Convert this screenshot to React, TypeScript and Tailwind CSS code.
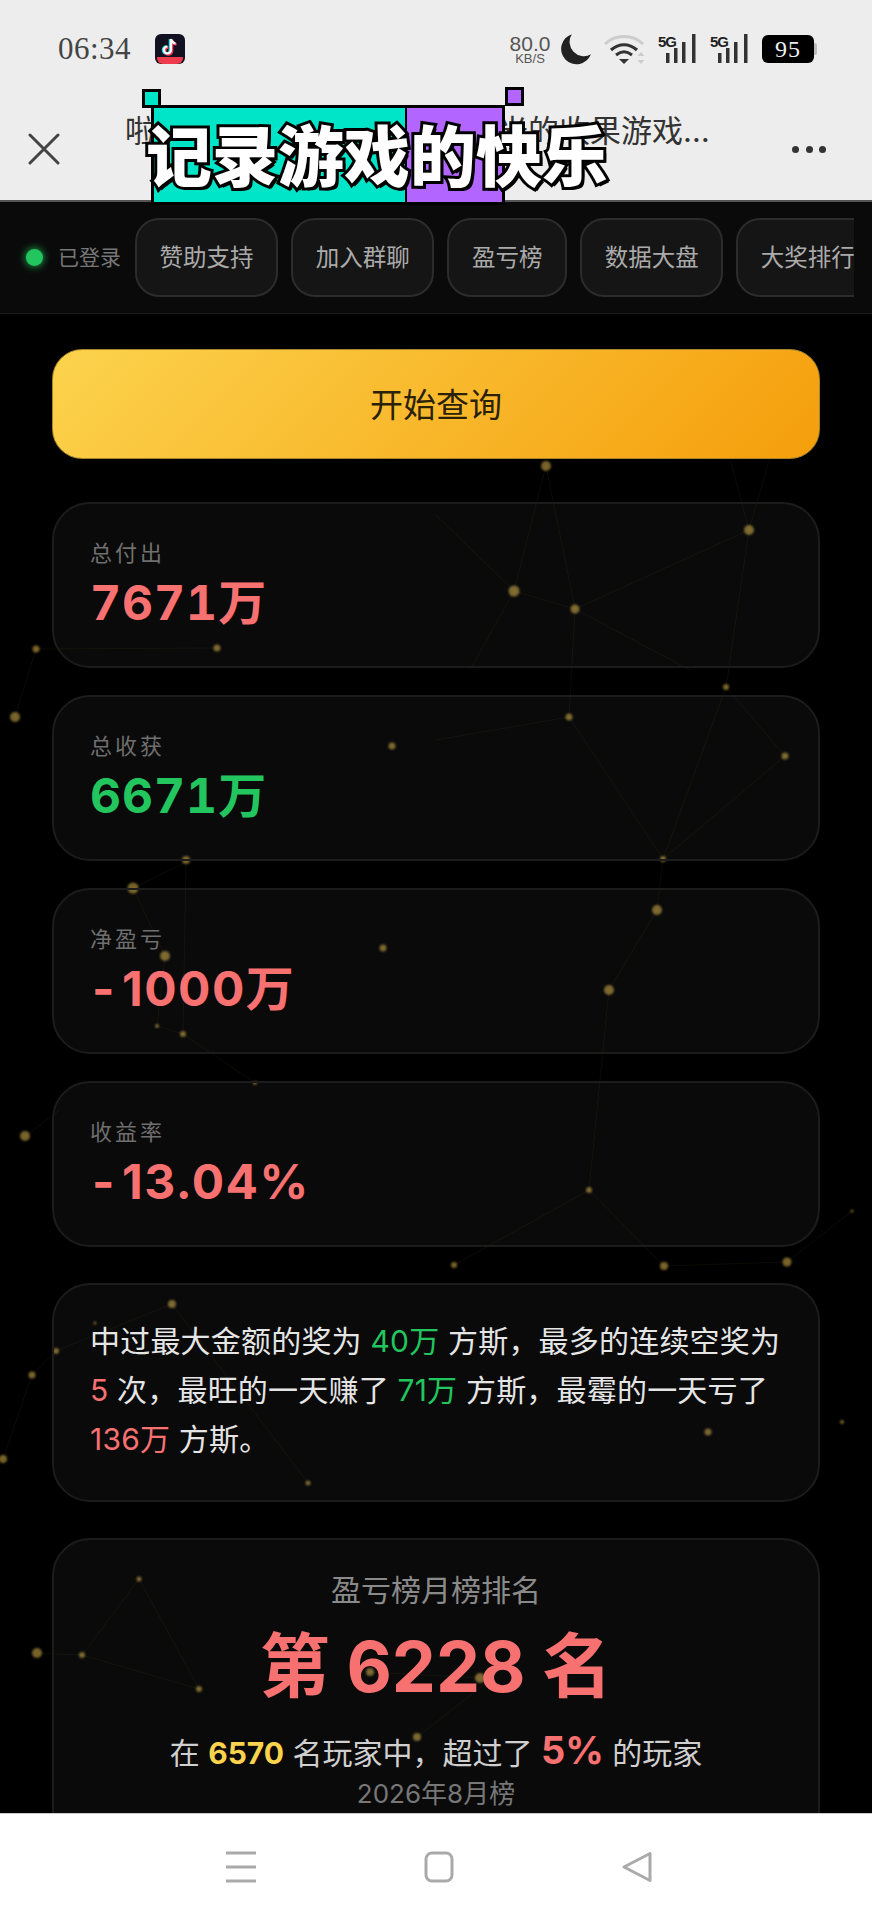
import React from "react";

const stats = [
  { label: "总付出", value: "7671万", color: "text-[#f87171]", negative: false },
  { label: "总收获", value: "6671万", color: "text-[#22c55e]", negative: false },
  { label: "净盈亏", value: "1000万", color: "text-[#f87171]", negative: true },
  { label: "收益率", value: "13.04%", color: "text-[#f87171]", negative: true },
];

const chips = ["赞助支持", "加入群聊", "盈亏榜", "数据大盘", "大奖排行"];

// background particle network, in page coordinates: x, y, radius
const dots: [number, number, number][] = [
  [546, 466, 5], [749, 530, 5], [514, 591, 5.5], [575, 609, 4.5], [726, 687, 3], [569, 717, 3.5],
  [785, 756, 3.5], [663, 859, 3], [36, 649, 3.5], [15, 717, 5], [217, 648, 3.5], [392, 746, 3.5],
  [186, 860, 4], [133, 888, 5.5], [165, 956, 5], [383, 948, 3.5], [157, 1026, 2], [183, 1034, 3],
  [255, 1083, 2], [25, 1136, 5], [657, 910, 5], [609, 990, 5], [589, 1190, 3], [454, 1265, 3],
  [664, 1266, 4], [787, 1262, 4.5], [852, 1211, 1.5], [172, 1304, 4], [56, 1351, 3], [32, 1375, 3.5],
  [3, 1459, 4], [95, 1323, 1.5], [708, 1432, 3.5], [842, 1422, 2], [308, 1483, 2.5], [139, 1579, 2.5],
  [37, 1653, 5], [82, 1655, 3], [199, 1689, 3], [417, 1737, 4], [370, 1672, 4], [480, 1678, 5],
];

const lines: [number, number, number, number][] = [
  [546, 466, 514, 591], [546, 466, 575, 609], [749, 530, 726, 687], [749, 530, 725, 440], [749, 530, 775, 440],
  [575, 609, 569, 717], [514, 591, 575, 609], [514, 591, 436, 515], [569, 717, 436, 740], [569, 717, 663, 859],
  [726, 687, 663, 859], [726, 687, 785, 756], [785, 756, 663, 859], [575, 609, 749, 530], [575, 609, 690, 670],
  [514, 591, 470, 670], [36, 649, 15, 717], [217, 648, 36, 649], [133, 888, 165, 956], [165, 956, 157, 1026],
  [186, 862, 183, 1034], [157, 1026, 183, 1034], [183, 1034, 255, 1083], [133, 888, 186, 862], [25, 1136, 60, 1110],
  [663, 859, 657, 910], [657, 910, 609, 990], [609, 990, 589, 1190], [589, 1190, 454, 1265], [589, 1190, 664, 1266],
  [664, 1266, 787, 1262], [787, 1262, 852, 1211], [172, 1304, 56, 1351], [56, 1351, 32, 1375], [32, 1375, 3, 1459],
  [172, 1304, 308, 1483], [139, 1579, 82, 1655], [139, 1579, 199, 1689], [37, 1653, 82, 1655], [82, 1655, 199, 1689],
  [370, 1672, 480, 1678], [417, 1737, 490, 1680],
];

const Signal = () => (
  <svg width="40" height="30" viewBox="0 0 40 30">
    <text x="0" y="13" fontSize="15" fontWeight="700" fill="#222" fontFamily="Liberation Sans, sans-serif" textLength="19">5G</text>
    <rect x="8" y="19" width="3.5" height="10" fill="#333" />
    <rect x="16" y="14" width="3.5" height="15" fill="#333" />
    <rect x="24" y="8" width="3.5" height="21" fill="#333" />
    <rect x="34" y="0" width="3.5" height="29" fill="#333" />
  </svg>
);

export default function App() {
  return (
    <div className="relative flex h-[1920px] w-[872px] flex-col overflow-hidden bg-black font-['Inter','Noto_Sans_CJK_SC',sans-serif]">
      {/* Status bar + title bar */}
      <div className="h-[202px] flex-shrink-0 border-b-2 border-[#555] bg-[#ededed]">
        <div className="flex h-[98px] items-center justify-between pl-[58px] pr-[55px]">
          <div className="flex items-center gap-[24px]">
            <span className="font-['Liberation_Serif',serif] text-[31px] tracking-[0.5px] text-[#444]">06:34</span>
            <svg width="30" height="30" viewBox="0 0 30 30">
              <rect width="30" height="30" rx="6" fill="#111122" />
              <path d="M2 23h26v1a6 6 0 0 1-6 6H8a6 6 0 0 1-6-6z" fill="#ef3b4e" />
              <path d="M16 5v11a3.5 3.5 0 1 1-3.5-3.5M16 5c.5 2.5 2 4 4.5 4.5" fill="none" stroke="#25d8e0" strokeWidth="2.6" transform="translate(-1 0)" />
              <path d="M16 5v11a3.5 3.5 0 1 1-3.5-3.5M16 5c.5 2.5 2 4 4.5 4.5" fill="none" stroke="#f5365c" strokeWidth="2.6" transform="translate(1 1)" />
              <path d="M16 5v11a3.5 3.5 0 1 1-3.5-3.5M16 5c.5 2.5 2 4 4.5 4.5" fill="none" stroke="#fff" strokeWidth="2.2" />
            </svg>
          </div>
          <div className="flex items-center">
            <div className="flex w-[42px] flex-col items-center font-['Liberation_Sans',sans-serif] text-[#555]">
              <span className="text-[21px] leading-[19px]">80.0</span>
              <span className="text-[13px] leading-[12px]">KB/S</span>
            </div>
            <svg className="ml-[7px]" width="34" height="34" viewBox="0 0 32 32">
              <path d="M13 2A14.5 14.5 0 1 0 31 21 A13.5 13.5 0 0 1 13 2Z" fill="#222" />
            </svg>
            <svg className="ml-[12px]" width="42" height="30" viewBox="0 0 42 30">
              <path d="M1 10C11 0 29 0 39 10" fill="none" stroke="#ccc" strokeWidth="3" />
              <path d="M7 16c8-7 18-7 26 0" fill="none" stroke="#333" strokeWidth="3.2" />
              <path d="M12 21c5-4 11-4 16 0" fill="none" stroke="#333" strokeWidth="3" />
              <path d="M15 25h10l-5 5z" fill="#333" />
              <path d="M37 18l3.5 4h-7zM37 30l3.5-4h-7z" fill="#ccc" />
            </svg>
            <div className="ml-[12px] flex gap-[12px]">
              <Signal />
              <Signal />
            </div>
            <div className="ml-[12px] flex h-[28px] w-[52px] items-center justify-center rounded-[6px] bg-black font-['Liberation_Serif',serif] text-[24px] tracking-[1px] text-[#eee]">
              95
            </div>
            <div className="h-[12px] w-[3px] rounded-r-[2px] bg-[#bbb]" />
          </div>
        </div>
        <div className="flex h-[102px] items-center">
          <svg className="ml-[28px] flex-shrink-0" width="32" height="32" viewBox="0 0 32 32">
            <path d="M2 2l28 28M30 2L2 30" stroke="#444" strokeWidth="3" strokeLinecap="round" />
          </svg>
          <div className="ml-[65px] mt-[-36px] w-[600px] flex-shrink-0 overflow-hidden whitespace-nowrap text-[31px] leading-[40px] text-[#333]">
            啦啦啦啦记录游戏的快乐时光的收果游戏…
          </div>
          <div className="ml-[67px] flex gap-[6.5px]">
            <span className="h-[7px] w-[7px] rounded-full bg-[#333]" />
            <span className="h-[7px] w-[7px] rounded-full bg-[#333]" />
            <span className="h-[7px] w-[7px] rounded-full bg-[#333]" />
          </div>
        </div>
      </div>

      {/* Video caption sticker on top of the title bar */}
      <div className="absolute left-[142px] top-[87px] z-30 h-[118px] w-[490px]">
        <div className="absolute left-0 top-[2px] h-[19px] w-[19px] border-[3px] border-black bg-[#00e5c8]" />
        <div className="absolute left-[363px] top-0 h-[19px] w-[19px] border-[3px] border-black bg-[#b366ff]" />
        <div className="absolute left-[9px] top-[18px] flex h-[100px] w-[354px] border-[3px] border-black bg-black">
          <div className="w-[251px] bg-[#00e5c8]" />
          <div className="ml-[2px] flex-1 bg-[#b366ff]" />
        </div>
        <div className="absolute left-[4px] top-[27px] whitespace-nowrap font-['Noto_Sans_CJK_SC',sans-serif] text-[66px] font-black leading-[76px] text-white [-webkit-text-stroke:6px_black] [paint-order:stroke_fill] [text-shadow:3px_3px_0_#000]">
          记录游戏的快乐
        </div>
      </div>

      {/* Page body */}
      <div className="relative flex-1 overflow-hidden bg-black">
        <svg className="absolute inset-0 h-full w-full" viewBox="0 202 872 1611">
          <g stroke="#d9b44a" strokeWidth="1" opacity="0.06">
            {lines.map(([x1, y1, x2, y2], i) => (
              <line key={i} x1={x1} y1={y1} x2={x2} y2={y2} />
            ))}
          </g>
          <g fill="#d9b44a" opacity="0.55" className="blur-[1px]">
            {dots.map(([cx, cy, r], i) => (
              <circle key={i} cx={cx} cy={cy} r={r} />
            ))}
          </g>
        </svg>

        <div className="relative">
          {/* Top nav */}
          <div className="flex h-[112px] items-start border-b border-[#1a1a1a] bg-[#0a0a0a] pl-[26px] pt-[16px]">
            <div className="flex h-[79px] flex-shrink-0 items-center">
              <span className="h-[17px] w-[17px] rounded-full bg-[#22c55e] shadow-[0_0_8px_#22c55e]" />
              <span className="ml-[15px] text-[21px] text-[#777]">已登录</span>
            </div>
            <div className="ml-[14px] flex w-[719px] flex-shrink-0 gap-[13px] overflow-hidden">
              {chips.map((chip) => (
                <div
                  key={chip}
                  className="flex h-[79px] flex-shrink-0 items-center justify-center whitespace-nowrap rounded-[24px] border-2 border-[#2c2c2c] bg-[#151515] px-[22.6px] text-[23.5px] text-[#aaa]"
                >
                  {chip}
                </div>
              ))}
            </div>
          </div>

          <div className="flex flex-col px-[52px] pt-[35px]">
            <button className="flex h-[110px] items-center justify-center rounded-[30px] border border-[#a8842a] bg-[linear-gradient(135deg,#fcd34d,#f59e0b)] pt-[3px] text-[33px] text-[#2a2108]">
              开始查询
            </button>

            <div className="mt-[43px] flex flex-col gap-[27px]">
              {stats.map((stat) => (
                <div
                  key={stat.label}
                  className="h-[166px] rounded-[38px] border-2 border-[#1c1c1c] bg-white/[0.04] pl-[36px] pt-[33px]"
                >
                  <div className="text-[22px] leading-[32px] tracking-[3px] text-[#6f6f6f]">{stat.label}</div>
                  <div
                    className={`mt-[6px] text-[48px] font-bold leading-[56px] ${stat.color} ${
                      stat.negative ? "tracking-[1.5px]" : "tabular-nums tracking-[1px]"
                    }`}
                  >
                    {stat.negative && <span className="ml-[2px] mr-[6px]">-</span>}
                    {stat.value}
                  </div>
                </div>
              ))}
            </div>

            <div className="mt-[36px] h-[219px] rounded-[38px] border-2 border-[#1c1c1c] bg-white/[0.04] pl-[36px] pr-[20px] pt-[32px] text-[30px] leading-[49px] tracking-[0.2px] text-[#e5e5e5]">
              中过最大金额的奖为 <span className="text-[#22c55e]">40万</span> 方斯，最多的连续空奖为
              <br />
              <span className="text-[#f87171]">5</span> 次，最旺的一天赚了 <span className="text-[#22c55e]">71万</span> 方斯，最霉的一天亏了
              <br />
              <span className="text-[#f87171]">136万</span> 方斯。
            </div>

            <div className="mt-[36px] h-[320px] rounded-[38px] border-2 border-[#1c1c1c] bg-white/[0.04] pt-[30px] text-center">
              <div className="text-[30px] leading-[40px] text-[#8a8a8a]">盈亏榜月榜排名</div>
              <div className="mt-[7px] text-[70px] font-bold leading-[100px] text-[#f87171]">第 6228 名</div>
              <div className="mt-[9px] text-[30px] leading-[48px] text-[#cfcfcf]">
                在 <span className="font-bold text-[#fcd34d]">6570</span> 名玩家中，超过了{" "}
                <span className="text-[38px] font-bold text-[#f87171]">5%</span> 的玩家
              </div>
              <div className="text-[26px] leading-[34px] text-[#777]">2026年8月榜</div>
            </div>
          </div>
        </div>
      </div>

      {/* Android nav bar */}
      <div className="relative z-10 flex h-[107px] flex-shrink-0 items-center justify-center gap-[166px] border-t border-[#ccc] bg-white pb-[1px] pl-[6px]">
        <svg width="32" height="32" viewBox="0 0 32 32">
          <path d="M1 2h30M1 16h30M1 30h30" stroke="#aaa" strokeWidth="3" />
        </svg>
        <svg width="32" height="32" viewBox="0 0 32 32">
          <rect x="3" y="2" width="26" height="28" rx="6" fill="none" stroke="#aaa" strokeWidth="3" />
        </svg>
        <svg width="32" height="32" viewBox="0 0 32 32">
          <path d="M29 2.5v27L3 16z" fill="none" stroke="#aaa" strokeWidth="3" strokeLinejoin="round" />
        </svg>
      </div>
    </div>
  );
}
